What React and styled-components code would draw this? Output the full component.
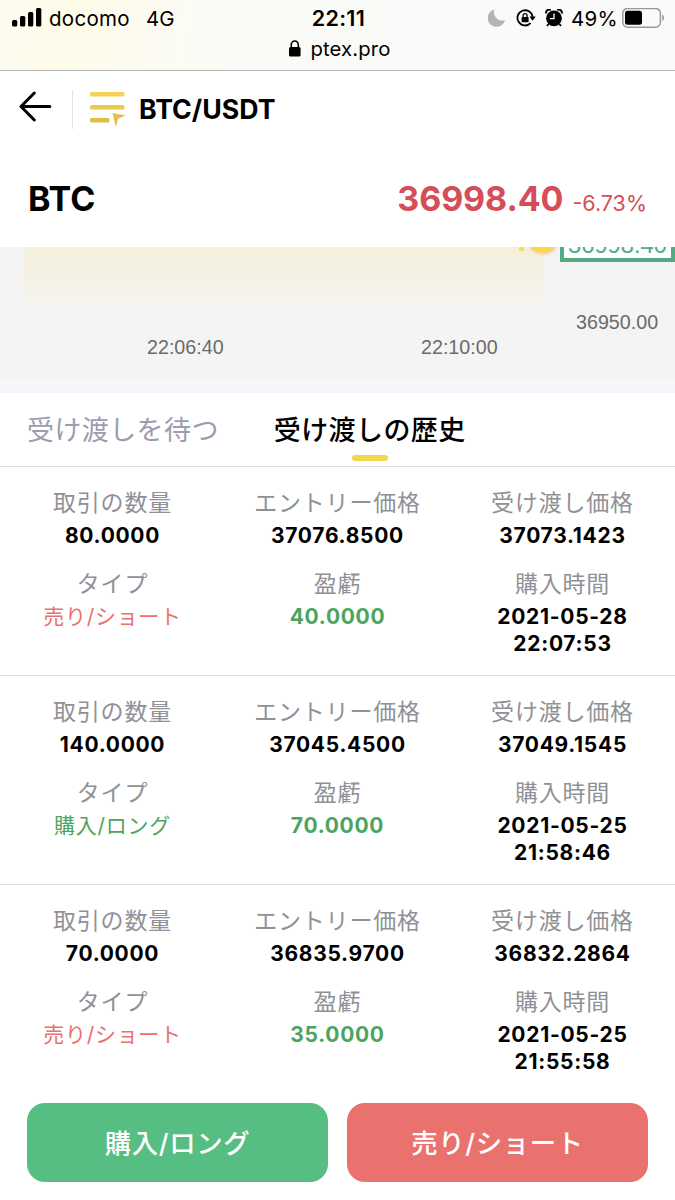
import React, { useState } from 'react'
import styled, { createGlobalStyle } from 'styled-components';

const GlobalStyle = createGlobalStyle`
    * {
        box-sizing: border-box;
    }
    body {
        margin: 0;
        background: #fff;
        color: #000;
        font-family: Inter, "Noto Sans CJK JP", sans-serif;
    }
`

const Screen = styled.div`
    width: 675px;
    height: 1200px;
    display: flex;
    flex-direction: column;
    overflow: hidden;
    background: #fff;
`

/* ---- browser status bar ---- */

const StatusBar = styled.div`
    height: 71px;
    flex: none;
    border-bottom: 1px solid #b3b3b3;
    background: linear-gradient(100deg, #fdfbf0 0%, #fffcea 11%, #fcfbf5 28%, #fafaf8 55%, #fafafa 100%);
`

const StatusRow = styled.div`
    height: 36px;
    display: grid;
    grid-template-columns: 1fr auto 1fr;
    align-items: center;
    padding: 0 10px 0 12px;
    font-size: 20.5px;
`

const Carrier = styled.div`
    display: flex;
    align-items: center;
    letter-spacing: 0.3px;
    svg {
        margin-right: 7px;
    }
`

const Network = styled.span`
    margin-left: 16px;
    letter-spacing: 0.2px;
`

const Clock = styled.div`
    font-size: 21.5px;
    font-weight: 600;
    letter-spacing: 0.3px;
`

const StatusIcons = styled.div`
    display: flex;
    align-items: center;
    justify-content: flex-end;
`

const AlarmGroup = styled.div`
    display: flex;
    align-items: center;
    gap: 9px;
    margin-left: 10px;
`

const Battery = styled.span`
    margin: 0 4px 0 8px;
    letter-spacing: 0.3px;
`

const Address = styled.div`
    display: flex;
    align-items: center;
    justify-content: center;
    gap: 9px;
    height: 25px;
    padding-left: 5px;
    font-size: 20.3px;
    letter-spacing: 0.15px;
`

/* ---- page header ---- */

const Header = styled.header`
    height: 78px;
    flex: none;
    display: flex;
    align-items: center;
    padding: 0 0 2px 19px;
`

const Divider = styled.div`
    width: 1px;
    height: 39px;
    margin: 0 17px 0 20px;
    background: #e4e4e8;
`

const Pair = styled.h1`
    margin: 0 0 0 13px;
    font-size: 26.7px;
    font-weight: 700;
`

const Quote = styled.div`
    height: 98px;
    flex: none;
    display: flex;
    align-items: baseline;
    justify-content: space-between;
    padding: 29px 28px 0;
    line-height: 42px;
`

const Coin = styled.span`
    font-size: 34px;
    font-weight: 700;
`

const Price = styled.span`
    color: #d44d57;
    font-size: 34px;
    font-weight: 700;
    letter-spacing: -0.1px;
`

const Change = styled.span`
    margin-left: 9px;
    color: #d44d57;
    font-size: 21.5px;
`

/* ---- chart ---- */

const Chart = styled.div`
    position: relative;
    height: 146px;
    flex: none;
    overflow: hidden;
    background: #f4f4f4;
    border-bottom: 13px solid #f5f6fa;
`

const Area = styled.div`
    width: 520px;
    height: 66px;
    margin-left: 24px;
    background: linear-gradient(#f4f0da, #f4f2e6 50%, #f4f4f4);
`

const Marker = styled.svg`
    position: absolute;
    left: 514px;
    top: 0;
`

const PriceTag = styled.div`
    position: absolute;
    top: -20px;
    right: 0;
    width: 115px;
    height: 35px;
    border: 4px solid #53ab86;
    background: #fdfefd;
    color: #53ab86;
    font: 23.7px/29px "Liberation Sans", sans-serif;
    text-align: center;
`

const AxisLabel = styled.span`
    position: absolute;
    left: ${props => props.x}px;
    top: ${props => props.y}px;
    color: #6b6b6b;
    font: 19.7px/24px "Liberation Sans", sans-serif;
`

/* ---- tabs ---- */

const Tabs = styled.nav`
    height: 74px;
    flex: none;
    display: flex;
    gap: 55px;
    padding-left: 27px;
    border-bottom: 1px solid #dcdce2;
`

const Tab = styled.button`
    position: relative;
    padding: 0 0 3px;
    border: 0;
    background: none;
    color: ${props => props.$active ? '#000' : '#9c9cb0'};
    font: ${props => props.$active ? 500 : 400} 27px "Noto Sans CJK JP", sans-serif;
    letter-spacing: 0.4px;
    &::after {
        content: '';
        display: ${props => props.$active ? 'block' : 'none'};
        position: absolute;
        left: 78px;
        bottom: 5px;
        width: 36px;
        height: 6px;
        border-radius: 3px;
        background: #f3d64e;
    }
`

/* ---- history ---- */

const History = styled.main`
    flex: 1;
    min-height: 0;
    overflow: hidden;
`

const Record = styled.section`
    height: 209px;
    display: grid;
    grid-template-columns: repeat(3, 1fr);
    grid-template-rows: 81px auto;
    padding-top: 16px;
    border-bottom: 1px solid #dedfe3;
    text-align: center;
`

const Label = styled.div`
    height: 39px;
    color: #8f9197;
    font: 23px/37px "Noto Sans CJK JP", sans-serif;
    letter-spacing: 0.8px;
`

const Value = styled.div`
    width: 150px;
    margin: 0 auto;
    color: ${props => props.color || '#000'};
    font-size: 21px;
    font-weight: ${props => props.$kana ? 400 : 700};
    line-height: 27px;
    letter-spacing: 0.7px;
    white-space: ${props => props.$kana ? 'nowrap' : 'normal'};
`

const Actions = styled.footer`
    height: 115px;
    flex: none;
    display: flex;
    gap: 19px;
    padding: 18px 27px;
    background: #fff;
`

const ActionButton = styled.button`
    flex: 1;
    height: 79px;
    padding: 0 0 2px;
    border: 0;
    border-radius: 18px;
    background: ${props => props.color};
    color: #fff;
    font: 500 26.4px Inter, "Noto Sans CJK JP", sans-serif;
    letter-spacing: 0.6px;
`

const GREEN = '#4ba55e'
const RED = '#e9716e'

const records = [
    { amount: '80.0000', entry: '37076.8500', settle: '37073.1423', side: 'short', profit: '40.0000', date: '2021-05-28', time: '22:07:53' },
    { amount: '140.0000', entry: '37045.4500', settle: '37049.1545', side: 'long', profit: '70.0000', date: '2021-05-25', time: '21:58:46' },
    { amount: '70.0000', entry: '36835.9700', settle: '36832.2864', side: 'short', profit: '35.0000', date: '2021-05-25', time: '21:55:58' },
]

const sides = {
    long: { text: '購入/ロング', color: GREEN },
    short: { text: '売り/ショート', color: RED },
}

const SignalIcon = () => (
    <svg width="30" height="20" viewBox="0 0 30 20">
        <rect x="0" y="12" width="5.3" height="6.5" rx="1.5" />
        <rect x="8" y="8" width="5.3" height="10.5" rx="1.5" />
        <rect x="16" y="4" width="5.3" height="14.5" rx="1.5" />
        <rect x="24" y="0" width="5.3" height="18.5" rx="1.5" />
    </svg>
)

const MoonIcon = () => (
    <svg width="18" height="18" viewBox="0 0 18 18">
        <path d="M6.3 .5C4.6 6.5 9.6 13.2 17 11.2A8.8 8.8 0 1 1 6.3 .5Z" fill="#b4b4b4" />
    </svg>
)

const RotationLockIcon = () => (
    <svg width="20" height="18" viewBox="0 0 20 18" fill="none" stroke="#000">
        <path d="M14.6 14.1A7.6 7.6 0 1 1 16.6 7.8" strokeWidth="1.8" />
        <path d="M13.4 7.4h6.3l-3.1 4.3z" fill="#000" stroke="none" />
        <rect x="5.6" y="8" width="7" height="5.3" rx=".7" fill="#000" stroke="none" />
        <path d="M7.1 8.3V6.7a2 2 0 0 1 4 0v1.6" strokeWidth="1.3" />
    </svg>
)

const AlarmIcon = () => (
    <svg width="18" height="18" viewBox="0 0 18 18" fill="none" stroke="#000">
        <circle cx="9" cy="9.3" r="7.9" fill="#000" stroke="none" />
        <path d="M1.2 4.4A3 3 0 0 1 5.7 1.1M12.3 1.1a3 3 0 0 1 4.5 3.3" strokeWidth="2" />
        <path d="M3.6 15 2 17M14.4 15l1.6 2" strokeWidth="1.8" />
        <path d="M9 4.6v5H5" stroke="#fff" strokeWidth="1.3" />
    </svg>
)

const BatteryIcon = () => (
    <svg width="43" height="21" viewBox="0 0 43 21">
        <rect x=".8" y=".4" width="37.6" height="18.8" rx="5" fill="none" stroke="#999" strokeWidth="1.5" />
        <rect x="3" y="2.8" width="17" height="14" rx="2.5" />
        <path d="M40.3 6.5V13c2.3-1.2 2.3-5.3 0-6.5Z" fill="#999" />
    </svg>
)

const PadlockIcon = () => (
    <svg width="12" height="17" viewBox="0 0 12 17">
        <rect x="0" y="7" width="11.6" height="9.5" rx="1.5" />
        <path d="M2.3 8V4.5a3.5 3.5 0 0 1 7 0V8" fill="none" stroke="#000" strokeWidth="1.6" />
    </svg>
)

const BackIcon = () => (
    <svg width="33" height="38" viewBox="0 0 33 38" fill="none" stroke="#000" strokeWidth="3" strokeLinecap="round" strokeLinejoin="round">
        <path d="M30.8 16.5H2M15.3 3 2 16.5 15.3 30" />
    </svg>
)

const MenuIcon = () => (
    <svg width="36" height="36" viewBox="0 0 36 36">
        <rect x="0" y="1" width="34.5" height="4.5" rx="1.5" fill="#f3d255" />
        <rect x="0" y="14" width="34.5" height="4.5" rx="1.5" fill="#ebca4f" />
        <rect x="0" y="27" width="19.5" height="4.5" rx="1.5" fill="#e0bd47" />
        <path d="m22.5 22 13 2.5-7.4 3.3-2.3 8.2z" fill="#e5be42" />
    </svg>
)

const HistoryRecord = ({ record }) => {
    const side = sides[record.side]

    return (
        <Record>
            <div>
                <Label>取引の数量</Label>
                <Value>{record.amount}</Value>
            </div>
            <div>
                <Label>エントリー価格</Label>
                <Value>{record.entry}</Value>
            </div>
            <div>
                <Label>受け渡し価格</Label>
                <Value>{record.settle}</Value>
            </div>
            <div>
                <Label>タイプ</Label>
                <Value $kana color={side.color}>{side.text}</Value>
            </div>
            <div>
                <Label>盈虧</Label>
                <Value color={GREEN}>{record.profit}</Value>
            </div>
            <div>
                <Label>購入時間</Label>
                <Value>{record.date}<br />{record.time}</Value>
            </div>
        </Record>
    )
}

const App = () => {
    const [tab, setTab] = useState('history')

    return (
        <Screen>
            <GlobalStyle />
            <StatusBar>
                <StatusRow>
                    <Carrier>
                        <SignalIcon />
                        docomo
                        <Network>4G</Network>
                    </Carrier>
                    <Clock>22:11</Clock>
                    <StatusIcons>
                        <MoonIcon />
                        <AlarmGroup>
                            <RotationLockIcon />
                            <AlarmIcon />
                        </AlarmGroup>
                        <Battery>49%</Battery>
                        <BatteryIcon />
                    </StatusIcons>
                </StatusRow>
                <Address>
                    <PadlockIcon />
                    ptex.pro
                </Address>
            </StatusBar>
            <Header>
                <BackIcon />
                <Divider />
                <MenuIcon />
                <Pair>BTC/USDT</Pair>
            </Header>
            <Quote>
                <Coin>BTC</Coin>
                <div>
                    <Price>36998.40</Price>
                    <Change>-6.73%</Change>
                </div>
            </Quote>
            <Chart>
                <Area />
                <Marker width="48" height="20" viewBox="0 0 48 20">
                    <defs>
                        <radialGradient id="glow">
                            <stop offset="0.6" stopColor="#f6c0a0" />
                            <stop offset="1" stopColor="#f4f4f4" stopOpacity="0" />
                        </radialGradient>
                    </defs>
                    <ellipse cx="29" cy="-3" rx="18" ry="14" fill="url(#glow)" />
                    <ellipse cx="28.5" cy="-4" rx="13.5" ry="9.8" fill="#f9d84a" />
                    <circle cx="7.5" cy="1.5" r="2.5" fill="#f8dd40" />
                </Marker>
                <PriceTag>36998.40</PriceTag>
                <AxisLabel x={576} y={63}>36950.00</AxisLabel>
                <AxisLabel x={147} y={88}>22:06:40</AxisLabel>
                <AxisLabel x={421} y={88}>22:10:00</AxisLabel>
            </Chart>
            <Tabs>
                <Tab $active={tab === 'waiting'} onClick={() => setTab('waiting')}>受け渡しを待つ</Tab>
                <Tab $active={tab === 'history'} onClick={() => setTab('history')}>受け渡しの歴史</Tab>
            </Tabs>
            <History>
                {records.map(record => <HistoryRecord key={record.entry} record={record} />)}
            </History>
            <Actions>
                <ActionButton color="#56bd83">{sides.long.text}</ActionButton>
                <ActionButton color={RED}>{sides.short.text}</ActionButton>
            </Actions>
        </Screen>
    )
}

export default App;
